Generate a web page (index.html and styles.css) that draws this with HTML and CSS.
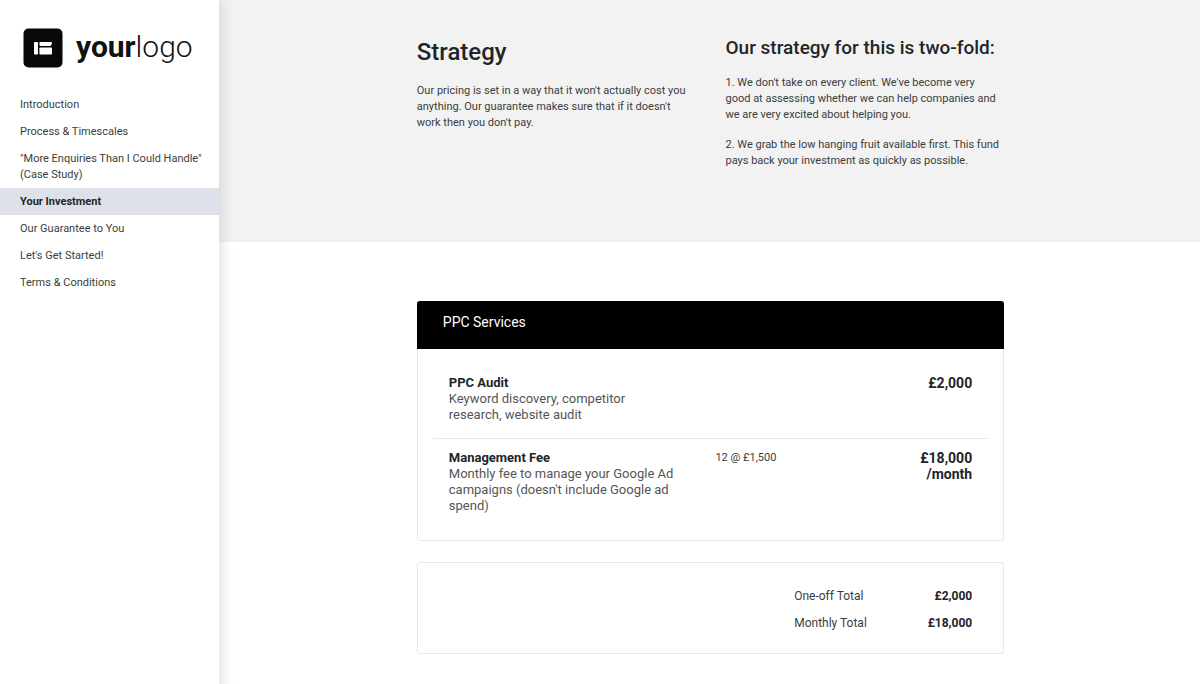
FILE: index.html
```
<!DOCTYPE html>
<html lang="en">
    <head>
        <title>Your Investment</title>
        <meta charset="UTF-8">
        <meta name="viewport" content="width=device-width, initial-scale=1.0">
        <link rel="stylesheet" href="styles.css">
    </head>
    <body>
        <aside class="sidebar">
            <div class="logo">
                <svg class="logo-mark" width="40" height="40" viewBox="0 0 40 40" aria-hidden="true">
                    <rect x="0.5" y="0.5" width="39" height="39" rx="5" fill="#080808"/>
                    <rect x="11" y="14" width="4" height="12.500" rx="0.8" fill="#fff"/>
                    <path d="M17.200 14H28.200Q29.200 14 29 15L28.200 17.200Q28 17.900 27 17.900H17.200Q16.400 17.900 16.400 17.100V14.800Q16.400 14 17.200 14Z" fill="#fff"/>
                    <path d="M17.200 19.500H28Q29 19.500 29 20.500V25.500Q29 26.500 28 26.500H17.200Q16.400 26.500 16.400 25.700V20.300Q16.400 19.500 17.200 19.500Z" fill="#fff"/>
                </svg>
                <span class="logo-text"><b>your</b>logo</span>
            </div>
            <nav class="menu">
                <a href="#">Introduction</a>
                <a href="#">Process &amp; Timescales</a>
                <a href="#">"More Enquiries Than I Could Handle"<br>(Case Study)</a>
                <a href="#" class="active">Your Investment</a>
                <a href="#">Our Guarantee to You</a>
                <a href="#">Let's Get Started!</a>
                <a href="#">Terms &amp; Conditions</a>
            </nav>
        </aside>
        <main>
            <section class="strategy">
                <div class="container columns">
                    <div>
                        <h1>Strategy</h1>
                        <p>Our pricing is set in a way that it won't actually cost you<br>anything. Our guarantee makes sure that if it doesn't<br>work then you don't pay.</p>
                    </div>
                    <div>
                        <h2>Our strategy for this is two-fold:</h2>
                        <p>1. We don't take on every client. We've become very<br>good at assessing whether we can help companies and<br>we are very excited about helping you.</p>
                        <p>2. We grab the low hanging fruit available first. This fund<br>pays back your investment as quickly as possible.</p>
                    </div>
                </div>
            </section>
            <section class="pricing">
                <div class="container">
                    <div class="card">
                        <h3>PPC Services</h3>
                        <table class="services">
                            <tr>
                                <td class="item"><b>PPC Audit</b><br>Keyword discovery, competitor<br>research, website audit</td>
                                <td class="quantity"></td>
                                <td class="price">£2,000</td>
                            </tr>
                            <tr>
                                <td class="item"><b>Management Fee</b><br>Monthly fee to manage your Google Ad<br>campaigns (doesn't include Google ad<br>spend)</td>
                                <td class="quantity">12 @ £1,500</td>
                                <td class="price">£18,000<br>/month</td>
                            </tr>
                        </table>
                    </div>
                    <div class="card">
                        <table class="totals">
                            <tr>
                                <th>One-off Total</th>
                                <td>£2,000</td>
                            </tr>
                            <tr>
                                <th>Monthly Total</th>
                                <td>£18,000</td>
                            </tr>
                        </table>
                    </div>
                </div>
            </section>
        </main>
    </body>
</html>
```
FILE: styles.css
```
*{
    box-sizing: border-box;
}
body{
    margin: 0;
    display: flex;
    min-height: 100vh;
    background-color: white;
    color: #3a3d40;
    font-family: Roboto, sans-serif;
    font-size: 11px;
    line-height: 16px;
}
h1, h2, h3, p{
    margin: 0;
}
b, h1, h2{
    color: #212529;
}
.sidebar{
    position: relative;
    flex: 0 0 219px;
    padding-top: 28px;
    background-color: white;
    box-shadow: 0 0 16px rgba(0, 0, 0, 0.16);
}
.logo{
    display: flex;
    align-items: center;
    gap: 13px;
    padding-left: 23px;
    height: 40px;
}
.logo-text{
    color: #111;
    font-size: 30px;
    font-weight: 300;
    line-height: 36px;
    margin-bottom: 2px;
}
.logo-text b{
    color: #111;
    font-weight: bold;
}
.menu{
    display: flex;
    flex-direction: column;
    margin-top: 23px;
}
.menu a{
    padding: 6px 10px 5px 20px;
    color: #3a3d40;
    text-decoration: none;
    white-space: nowrap;
}
.menu .active{
    background-color: #dee1ea;
    color: #212529;
    font-weight: bold;
}
main{
    flex: 1;
}
.container{
    width: 60%;
    margin: 0 auto;
}
.strategy{
    min-height: 242px;
    padding: 36px 0 56px 2px;
    background-color: #f2f2f2;
}
.columns{
    display: grid;
    grid-template-columns: 1fr 1fr;
    gap: 30px;
}
.columns p{
    margin-bottom: 14px;
    white-space: nowrap;
}
h1{
    margin-bottom: 15px;
    font-size: 24px;
    font-weight: 500;
    line-height: 32px;
}
h2{
    margin-bottom: 15px;
    font-size: 19px;
    font-weight: 500;
    line-height: 24px;
    white-space: nowrap;
}
.pricing{
    padding: 59px 0 30px 2px;
}
.card{
    margin-bottom: 21px;
    border: 1px solid #e8e8e8;
    border-radius: 3px;
}
h3{
    margin: -1px -1px 0;
    padding: 11px 26px 17px;
    background-color: black;
    border-radius: 3px 3px 0 0;
    color: white;
    font-size: 14px;
    font-weight: normal;
    line-height: 20px;
}
table{
    border-collapse: collapse;
}
td, th{
    padding: 0;
    vertical-align: top;
}
.services{
    width: calc(100% - 30px);
    margin: 15px 15px 11px;
}
.services td{
    padding: 11px 16px 15px;
}
.services tr + tr{
    border-top: 1px solid #e8e8e8;
}
.services .item{
    width: 48%;
    color: #555;
    font-size: 13px;
    white-space: nowrap;
}
.price{
    color: #212529;
    font-size: 14px;
    font-weight: bold;
    text-align: right;
}
.totals{
    width: 178px;
    margin: 19px 31px 17px auto;
}
.totals th{
    padding: 6px 0 5px;
    font-size: 12px;
    font-weight: normal;
    text-align: left;
}
.totals td{
    padding: 6px 0 5px;
    color: #212529;
    font-size: 12px;
    font-weight: bold;
    text-align: right;
}
```
